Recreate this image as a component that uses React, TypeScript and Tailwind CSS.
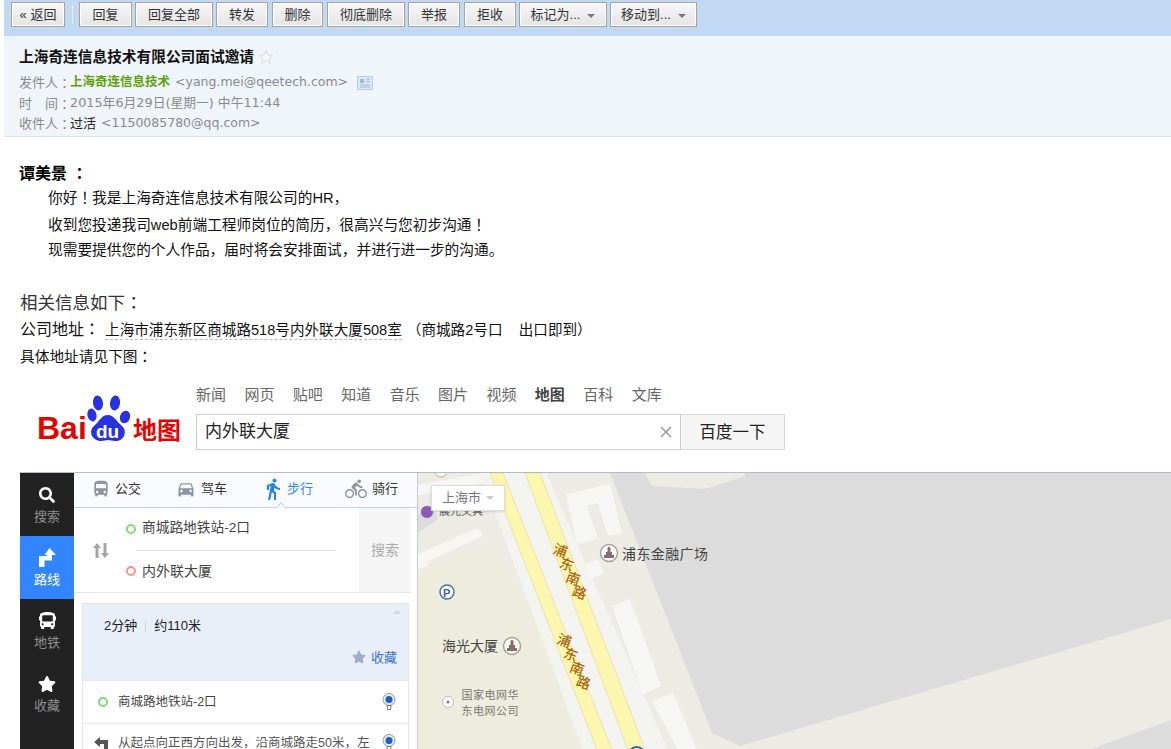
import { MdDirectionsBus, MdDirectionsCar, MdDirectionsWalk, MdDirectionsBike } from 'react-icons/md';
import { FaSearch, FaStar, FaBus } from 'react-icons/fa';

// full width punctuation sits centred in the cell in the reference, as in the TC font
const Mid = ({ c }: { c: string }) => <span className="font-['Noto_Sans_CJK_TC',sans-serif]">{c}</span>;

const ToolButton = ({ label, width, caret }: { label: string; width: string; caret?: boolean }) => (
  <button
    className={`${width} h-[25px] shrink-0 flex items-center justify-center gap-[7px] border border-[#a3a3a3] bg-gradient-to-b from-[#f7f7f7] to-[#e4e4e4] shadow-[inset_0_0_0_1px_#fff] text-[13px] text-[#333]`}
  >
    {label}
    {caret && <span className="w-0 h-0 mt-[2px] border-x-[4px] border-x-transparent border-t-[4px] border-t-[#777]" />}
  </button>
);

const RoadLabel = ({ x, y }: { x: number; y: number }) => (
  <g fill="#a6660c" fontSize="14" fontWeight="500">
    {['浦', '东', '南', '路'].map((c, i) => (
      <text key={c} x={x + i * 6.4} y={y + i * 14} transform={`rotate(20 ${x + i * 6.4} ${y + i * 14})`}>
        {c}
      </text>
    ))}
  </g>
);

const PoiBuilding = ({ x, y }: { x: number; y: number }) => (
  <g>
    <circle cx={x} cy={y} r="8.5" fill="#fff" stroke="#a89e9c" strokeWidth="1.5" />
    <path d={`M${x - 5} ${y + 5}h10v-3h-2v-3h-1.5v-4l-1.5-1.5-1.5 1.5v4h-1.5v3h-2z`} fill="#8b6a66" />
  </g>
);

const MapView = () => (
  <svg viewBox="0 0 753 277" preserveAspectRatio="xMinYMin slice" className="w-full h-full" fontFamily="'Noto Sans CJK SC', sans-serif">
    <rect width="753" height="277" fill="#ecebe4" />
    {/* left block */}
    <polygon points="0,96 72,72 200,277 0,277" fill="#eeecdc" />
    <polygon points="0,0 72,0 90,30 0,62" fill="#ecebe6" />
    <polygon points="0,12 66,0 76,8 0,22" fill="#f6f6f4" />
    <polygon points="0,42 14,32 20,46 0,60" fill="#dcdcdc" />
    <polygon points="0,81 60,55 65,63 10,88 10,93 0,96" fill="#f7f6f3" />
    {/* road */}
    <polygon points="62,0 128,0 250,277 165,277" fill="#f3f3f0" />
    <polygon points="72,0 85,0 194,277 179,277" fill="#fdf6ae" stroke="#e3d9a0" strokeWidth="0.7" />
    <polygon points="107,0 122,0 227,277 210,277" fill="#fdf6ae" stroke="#e3d9a0" strokeWidth="0.7" />
    {/* grey plots */}
    <polygon points="192,0 227,0 234,13 287,16 327,3 327,0 753,0 753,146 322,273 294,260" fill="#dcdcdc" />
    <polygon points="670,277 753,247 753,277" fill="#dcdcdc" />
    {/* buildings */}
    <polygon points="148,21 192,11 204,60 190,63 180,30 169,33 180,66 159,71" fill="#f6f6f3" />
    <polygon points="167,91 180,86 186,100 173,106" fill="#f6f6f3" />
    <polygon points="194,133 212,126 243,213 225,222" fill="#f6f6f3" />
    <polygon points="234,228 255,220 279,277 260,277" fill="#f6f6f3" />
    <RoadLabel x={134} y={80} />
    <RoadLabel x={138} y={170} />
    {/* poi */}
    <PoiBuilding x={191} y={80} />
    <text x={204} y={86} fontSize="14" letterSpacing="0.4" fill="#444">浦东金融广场</text>
    <PoiBuilding x={94} y={173} />
    <text x={24} y={178} fontSize="14" fill="#444">海光大厦</text>
    <circle cx={30} cy={229} r="5.5" fill="#fff" stroke="#bbb" />
    <circle cx={30} cy={229} r="1.5" fill="#777" />
    <text x={43.500} y={225.500} fontSize="11" letterSpacing="0.5" fill="#777">国家电网华</text>
    <text x={43.500} y={242} fontSize="11" letterSpacing="0.5" fill="#777">东电网公司</text>
    <circle cx={29} cy={119} r="7" fill="#fff" stroke="#3f72b8" strokeWidth="1.5" />
    <text x={25} y={123.500} fontSize="11" fontWeight="700" fill="#3565ad" fontFamily="'Liberation Sans', sans-serif">P</text>
    <circle cx={9} cy={39} r="6.5" fill="#8e58b8" stroke="#ddd" />
    <text x={21} y={42} fontSize="11" fill="#666">晨光文具</text>
    <circle cx={23} cy={-2} r="6" fill="#fff" stroke="#e0a060" />
    <circle cx={218.700} cy={282} r="8" fill="#fff" stroke="#2a5fb0" strokeWidth="2" />
  </svg>
);

const RouteIcon = () => (
  <svg width="19" height="19" viewBox="0 0 19 19" fill="#fff">
    <path d="M11.5 0 18 7h-4v5.5H6.5V19H1v-11h8V7H6.5z" />
  </svg>
);

const RailItem = ({ icon, label, active }: { icon: React.ReactNode; label: string; active?: boolean }) => (
  <div className={`h-[63px] flex flex-col items-center justify-center gap-[4px] ${active ? 'bg-[#3385ff] text-white' : 'text-[#8f8f8f]'}`}>
    <span className="h-[20px] flex items-center text-white">{icon}</span>
    <span className="text-[13px] leading-[16px]">{label}</span>
  </div>
);

const TabItem = ({ icon, label, width, gap, active }: { icon: React.ReactNode; label: string; width: string; gap: string; active?: boolean }) => (
  <div className={`${width} ${gap} flex items-center text-[13px] ${active ? 'text-[#3385ff]' : 'text-[#333]'}`}>
    <span className={`flex ${active ? 'text-[#1f85e8]' : 'text-[#8c95a3]'}`}>{icon}</span>
    {label}
  </div>
);

const Pin = () => (
  <svg width="14" height="18" viewBox="0 0 14 18">
    <circle cx="7" cy="6.5" r="6" fill="#e9e9e9" stroke="#999" />
    <circle cx="7" cy="6.5" r="3.5" fill="#1a62c0" />
    <path d="M5 12.5h4l-.5 4h-3z" fill="#fff" stroke="#777" />
  </svg>
);

const App = () => {
  const cjk = "font-['Liberation_Sans','Noto_Sans_CJK_SC',sans-serif]";
  return (
    <div className={`w-[1171px] h-[749px] overflow-hidden bg-white flex flex-col ${cjk}`}>
      {/* toolbar */}
      <div className="ml-[4px] h-[36px] shrink-0 bg-[#c1d9f3] flex items-start pt-[2px] pl-[7px] pb-[9px]">
        <ToolButton label="« 返回" width="w-[54px]" />
        <span className="w-px h-[19px] mt-[3px] ml-[7px] mr-[6px] bg-[#e8f0fa]" />
        <div className="flex gap-[3px]">
          <ToolButton label="回复" width="w-[53px]" />
          <ToolButton label="回复全部" width="w-[78px]" />
          <ToolButton label="转发" width="w-[52px] mr-px" />
          <ToolButton label="删除" width="w-[51px] mr-px" />
          <ToolButton label="彻底删除" width="w-[78px]" />
          <ToolButton label="举报" width="w-[52px] mr-px" />
          <ToolButton label="拒收" width="w-[52px]" />
          <ToolButton label="标记为..." width="w-[88px]" caret />
          <ToolButton label="移动到..." width="w-[87px]" caret />
        </div>
      </div>

      {/* mail header */}
      <div className="ml-[4px] h-[101px] shrink-0 bg-[#eff5fb] border-b border-[#d5e0ec] pl-[15px] pt-[11px] text-[13px] text-[#8a8a8a] font-['DejaVu_Sans','Noto_Sans_CJK_SC',sans-serif]">
        <div className="h-[20px] flex items-center gap-[4px] text-[14.700px] font-bold text-[#111]">
          上海奇连信息技术有限公司面试邀请
          <svg width="16" height="16" viewBox="0 0 16 16" fill="#f8f8f8" stroke="#d8d8d8">
            <path d="M8 1.5l2 4.4 4.8.5-3.6 3.2 1 4.7L8 11.4l-4.2 2.9 1-4.7L1.200 6.400 6 5.900z" />
          </svg>
        </div>
        <div className="h-[21px] mt-[5px] flex items-center leading-none">
          发件人<Mid c="：" /><span className="font-bold text-[#5fa207] text-[12.500px] ml-[-1px]">上海奇连信息技术</span>
          <span className="ml-[5px] text-[12.500px]">&lt;yang.mei@qeetech.com&gt;</span>
          <svg width="16" height="14" viewBox="0 0 16 14" className="ml-[9px]">
            <rect x="0.500" y="0.500" width="15" height="13" fill="#dce9f5" stroke="#b6cde3" />
            <rect x="3" y="3" width="4" height="4" fill="#9db9d4" />
            <path d="M9 3h4M9 5.500h4M3 9h10M3 11h10" stroke="#9db9d4" />
          </svg>
        </div>
        <div className="h-[20px] flex items-center leading-none">
          时<span className="w-[13px]" />间<Mid c="：" /><span className="text-[12.800px] ml-[-1px]">2015年6月29日(星期一) 中午11:44</span>
        </div>
        <div className="h-[20px] flex items-center leading-none">
          收件人<Mid c="：" /><span className="text-[#222] ml-[-1px]">过活</span>
          <span className="ml-[5px] text-[12.500px]">&lt;1150085780@qq.com&gt;</span>
        </div>
      </div>

      {/* mail body */}
      <div className="pl-[20px] flex-1 min-h-0 flex flex-col text-black">
        <div className="mt-[24px] -ml-px h-[22px] leading-[22px] text-[16px] font-bold">谭美景 <Mid c="：" /></div>
        <div className="pl-[28px] text-[14.700px] leading-[26.500px] text-[#111] mt-[1px]">
          <p className="h-[26.500px]">你好<Mid c="！" />我是上海奇连信息技术有限公司的HR，</p>
          <p className="h-[26.500px]">收到您投递我司web前端工程师岗位的简历，很高兴与您初步沟通<Mid c="！" /></p>
          <p className="h-[26.500px]">现需要提供您的个人作品，届时将会安排面试，并进行进一步的沟通。</p>
        </div>
        <div className="mt-[26.500px] h-[24px] leading-[24px] text-[17.500px] text-[#333]">相关信息如下<Mid c="：" /></div>
        <div className="h-[26px] mt-px leading-[26px] text-[14.600px] text-[#111] whitespace-nowrap">
          <span className="text-[16px]">公司地址<Mid c="：" /></span><span className="border-b border-dashed border-[#bbb] ml-[5px] pb-[1px]">上海市浦东新区商城路518号内外联大厦508室</span>
          <span className="ml-[5px]">（商城路2号口&nbsp;&nbsp;&nbsp;&nbsp;出口即到）</span>
        </div>
        <div className="mt-[2px] h-[26px] leading-[26px] text-[14.700px] text-[#111]">具体地址请见下图<Mid c="：" /></div>

        {/* baidu header */}
        <div className="mt-[10px] h-[93px] shrink-0 flex">
          <div className="w-[176px] shrink-0 pl-[16px] pt-[15px]">
            <svg width="150" height="52" viewBox="0 0 150 52">
              <g fill="#2932e1">
                <ellipse cx="62" cy="9" rx="5" ry="7.500" transform="rotate(-8 62 9)" />
                <ellipse cx="79" cy="9" rx="5" ry="7.500" transform="rotate(8 79 9)" />
                <ellipse cx="89" cy="23" rx="5" ry="6.500" transform="rotate(20 89 23)" />
                <ellipse cx="56" cy="21" rx="4.500" ry="6.500" transform="rotate(-15 56 21)" />
                <path d="M72 21c6 0 8 6 14 11 6 5 2 16-7 15-3 0-5-1-7-1s-4 1-7 1c-9 0-13-10-7-15 6-5 7-11 14-11z" />
              </g>
              <text x="1" y="45" fontSize="32" fontWeight="700" fill="#e10601" fontFamily="'Liberation Sans', sans-serif">Bai</text>
              <text x="60" y="44" fontSize="19" fontWeight="700" fill="#fff" fontFamily="'Liberation Sans', sans-serif">du</text>
              <text x="97" y="45" fontSize="24" fontWeight="700" fill="#e10601" fontFamily="'Noto Sans CJK SC', sans-serif">地图</text>
            </svg>
          </div>
          <div className="flex flex-col">
            <div className="h-[35px] pb-[3px] flex gap-[18.400px] items-center text-[15px] text-[#666]">
              <span>新闻</span><span>网页</span><span>贴吧</span><span>知道</span><span>音乐</span><span>图片</span><span>视频</span>
              <span className="font-bold text-[#444]">地图</span><span>百科</span><span>文库</span>
            </div>
            <div className="flex h-[36px]">
              <div className="w-[485px] border border-[#ccc] flex items-center justify-between pl-[8px] pr-[8px] text-[17px] text-[#222]">
                内外联大厦
                <svg width="12" height="12" viewBox="0 0 12 12" stroke="#999" strokeWidth="1.500"><path d="M1 1l10 10M11 1 1 11" /></svg>
              </div>
              <div className="w-[104px] border border-l-0 border-[#d8d8d8] bg-[#f5f5f5] flex items-center justify-center text-[16.500px] text-[#222]">百度一下</div>
            </div>
          </div>
        </div>

        {/* map app */}
        <div className="flex-1 min-h-0 border-t border-[#b3bcc8] flex overflow-hidden">
          <div className="w-[54px] shrink-0 bg-[#222]">
            <RailItem icon={<FaSearch size={16} />} label="搜索" />
            <RailItem icon={<RouteIcon />} label="路线" active />
            <RailItem icon={<FaBus size={17} />} label="地铁" />
            <RailItem icon={<FaStar size={18} />} label="收藏" />
          </div>
          <div className="w-[343px] shrink-0 bg-white flex flex-col">
            <div className="relative h-[35px] pb-[2px] shrink-0 bg-[#f9fbfe] border-b border-[#b8d3f5] flex items-center pl-[17px]">
              <TabItem icon={<MdDirectionsBus size={20} />} label="公交" width="w-[85px]" gap="gap-[4px]" />
              <TabItem icon={<MdDirectionsCar size={20} />} label="驾车" width="w-[85px]" gap="gap-[5px]" />
              <TabItem icon={<MdDirectionsWalk size={24} />} label="步行" width="w-[84px]" gap="gap-[2px]" active />
              <TabItem icon={<MdDirectionsBike size={22} />} label="骑行" width="w-[60px]" gap="gap-[5px]" />
              <span className="absolute left-[203px] bottom-[-5px] w-[8px] h-[8px] rotate-45 bg-white border-l border-t border-[#b8d3f5]" />
            </div>
            <div className="h-[85px] shrink-0 w-[337px] flex border-b border-[#e6e6e6] text-[14px] text-[#444]">
              <div className="w-[52px] flex items-center justify-center pl-[2px]">
                <svg width="16" height="15" viewBox="0 0 16 15" fill="#a5a5a5">
                  <path d="M4 0l4 5H5.500v10h-3V5H0zM10.500 0h3v10H16l-4 5-4-5h2.500z" />
                </svg>
              </div>
              <div className="w-[233px] flex flex-col">
                <div className="flex-1 flex items-center">
                  <span className="w-[10px] h-[10px] rounded-full border-2 border-[#7fdc73]" />
                  <span className="ml-[6px] text-[13.700px]">商城路地铁站-2口</span>
                </div>
                <div className="h-px w-[200px] ml-[10px] bg-[#e6e6e6]" />
                <div className="flex-1 flex items-center">
                  <span className="w-[10px] h-[10px] rounded-full border-2 border-[#ff8f8f]" />
                  <span className="ml-[6px]">内外联大厦</span>
                </div>
              </div>
              <div className="w-[52px] bg-[#f5f5f5] flex items-center justify-center text-[#aaa]">搜索</div>
            </div>
            <div className="mt-[10px] ml-[8px] w-[327px] border border-[#e2e6ed] text-[13px]">
              <div className="relative h-[76px] bg-[#e8eff9] text-[#222]">
                <div className="flex items-center pl-[21px] pt-[11px] h-[33px]">
                  2分钟<span className="w-px h-[13px] mx-[8px] bg-[#cfd5de]" />约110米
                </div>
                <span className="absolute right-[7px] top-[6px] w-0 h-0 border-x-[4px] border-x-transparent border-b-[4px] border-b-[#cfd6e2]" />
                <div className="absolute right-[11px] bottom-[13px] flex items-center gap-[5px] text-[#3a6fd0]">
                  <FaStar size={14} className="text-[#9fadc6]" />收藏
                </div>
              </div>
              <div className="h-[43px] border-t border-[#e6e6e6] flex items-center pl-[15px] pr-[12px] text-[12.500px] text-[#444]">
                <span className="w-[10px] h-[10px] rounded-full border-2 border-[#7fdc73]" />
                <span className="ml-[10px] flex-1">商城路地铁站-2口</span>
                <Pin />
              </div>
              <div className="h-[43px] border-t border-[#e6e6e6] flex items-start pt-[10px] pl-[11px] pr-[12px] text-[12.500px] text-[#555]">
                <svg width="14" height="14" viewBox="0 0 14 14" fill="#555" className="mt-[2px]">
                  <path d="M6 1 0 6l6 5V8h4v6h4V4H6z" />
                </svg>
                <span className="ml-[10px] flex-1 whitespace-nowrap overflow-hidden">从起点向正西方向出发，沿商城路走50米，左</span>
                <Pin />
              </div>
            </div>
          </div>
          <div className="flex-1 min-w-0 relative border-l border-[#c4c8cf]">
            <MapView />
            <div className="absolute left-[13px] top-[12px] w-[74px] h-[26px] bg-white border border-[#ddd] shadow-sm flex items-center pl-[10px] gap-[5px] text-[13px] text-[#777]">
              上海市
              <span className="w-0 h-0 border-x-[4px] border-x-transparent border-t-[4px] border-t-[#ccc]" />
            </div>
          </div>
        </div>
      </div>
    </div>
  );
};

export default App;
